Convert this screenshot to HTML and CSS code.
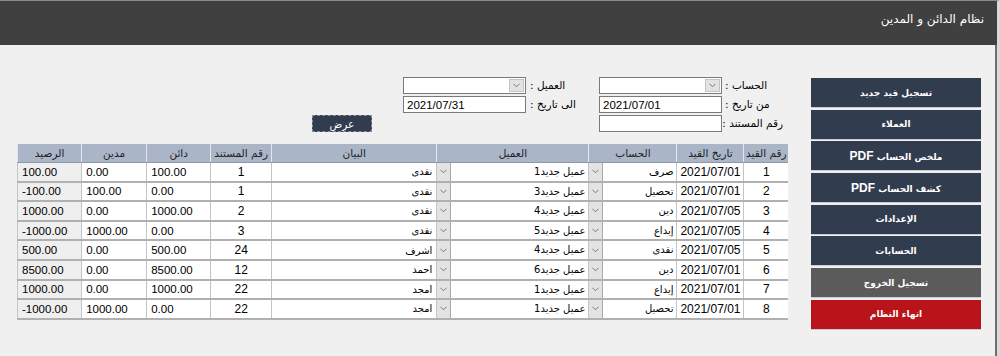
FILE: index.html
```html
<!DOCTYPE html>
<html lang="ar" dir="rtl">
<head>
  <meta charset="UTF-8" />
  <meta name="viewport" content="width=device-width, initial-scale=1.0"/>
  <title>نظام الدائن و المدين</title>
  <link rel="stylesheet" href="styles.css">
</head>
<body>
  <div class="app">
    <header class="titlebar">نظام الدائن و المدين</header>

    <div class="content">
      <aside class="side">
        <button class="nav">تسجيل قيد جديد</button>
        <button class="nav">العملاء</button>
        <button class="nav">ملخص الحساب <b>PDF</b></button>
        <button class="nav">كشف الحساب <b>PDF</b></button>
        <button class="nav">الإعدادات</button>
        <button class="nav">الحسابات</button>
        <button class="nav logout">تسجيل الخروج</button>
        <button class="nav quit">انهاء النظام</button>
      </aside>

      <main class="main">
        <form class="filters">
          <label class="lbl l1 r1">الحساب :</label>
          <div class="combo f1 r1"><span class="arrow"><svg viewBox="0 0 8 5"><path d="M0.5 0.5 L4 4 L7.5 0.5"/></svg></span><span class="val"></span></div>
          <label class="lbl l2 r1">العميل :</label>
          <div class="combo f2 r1"><span class="arrow"><svg viewBox="0 0 8 5"><path d="M0.5 0.5 L4 4 L7.5 0.5"/></svg></span><span class="val"></span></div>

          <label class="lbl l1 r2">من تاريخ :</label>
          <input class="field f1 r2" type="text" value="2021/07/01">
          <label class="lbl l2 r2">الى تاريخ :</label>
          <input class="field f2 r2" type="text" value="2021/07/31">

          <label class="lbl l1 r3">رقم المستند :</label>
          <input class="field f1 r3" type="text" value="">
          <button class="show r3" type="button">عرض</button>
        </form>

        <table class="grid">
          <colgroup>
            <col style="width:44px"><col style="width:67px"><col style="width:88px">
            <col style="width:152px"><col style="width:165px"><col style="width:61px">
            <col style="width:64px"><col style="width:65px"><col style="width:64px">
          </colgroup>
          <thead>
            <tr>
              <th>رقم القيد</th><th>تاريخ القيد</th><th>الحساب</th><th>العميل</th><th>البيان</th>
              <th>رقم المستند</th><th>دائن</th><th>مدين</th><th>الرصيد</th>
            </tr>
          </thead>
          <tbody id="rows"></tbody>
        </table>
      </main>
    </div>
  </div>

  <script>
    const rows = [
      [1, '2021/07/01', 'صرف', 'عميل جديد1', 'نقدى', 1, '100.00', '0.00', '100.00'],
      [2, '2021/07/01', 'تحصيل', 'عميل جديد3', 'نقدى', 1, '0.00', '100.00', '-100.00'],
      [3, '2021/07/05', 'دين', 'عميل جديد4', 'نقدى', 2, '1000.00', '0.00', '1000.00'],
      [4, '2021/07/05', 'إيداع', 'عميل جديد5', 'نقدى', 3, '0.00', '1000.00', '-1000.00'],
      [5, '2021/07/05', 'نقدى', 'عميل جديد4', 'اشرف', 24, '500.00', '0.00', '500.00'],
      [6, '2021/07/01', 'دين', 'عميل جديد6', 'احمد', 12, '8500.00', '0.00', '8500.00'],
      [7, '2021/07/01', 'إيداع', 'عميل جديد1', 'امجد', 22, '1000.00', '0.00', '1000.00'],
      [8, '2021/07/01', 'تحصيل', 'عميل جديد1', 'امجد', 22, '0.00', '1000.00', '-1000.00']
    ];
    const arrow = '<span class="arrow"><svg viewBox="0 0 8 5"><path d="M0.5 0.5 L4 4 L7.5 0.5"/></svg></span>';
    const combo = text => `<div class="cell-combo"><span class="val">${text}</span>${arrow}</div>`;

    document.getElementById('rows').innerHTML = rows.map(r => `
      <tr>
        <td class="num">${r[0]}</td>
        <td class="date">${r[1]}</td>
        <td class="cmb">${combo(r[2])}</td>
        <td class="cmb">${combo(r[3])}</td>
        <td class="note">${r[4]}</td>
        <td class="num">${r[5]}</td>
        <td class="amt">${r[6]}</td>
        <td class="amt">${r[7]}</td>
        <td class="amt bal">${r[8]}</td>
      </tr>`).join('');
  </script>
</body>
</html>
```

FILE: styles.css
```css
body {
  margin: 0;
  background-color: #f0f0f0;
  font-family: "Liberation Sans", "DejaVu Sans", sans-serif;
  color: #000;
}

.app {
  height: 356px;
  border-top: 1px solid #8a8a8a;
  border-right: 3px solid #d9d9d9;
  box-sizing: border-box;
  display: flex;
  flex-direction: column;
}

.titlebar {
  height: 44px;
  background-color: #404040;
  color: #fff;
  font-family: "DejaVu Sans", sans-serif;
  font-size: 12px;
  padding: 11px 13px 0 0;
  box-sizing: border-box;
}

.content {
  flex: 1;
  display: flex;
}

/* sidebar */
.side {
  width: 198px;
  border-right: 2px solid #6e6e6e;
  box-sizing: border-box;
  padding: 33px 14px 0 12px;
  display: flex;
  flex-direction: column;
  gap: 1.7px;
}

.nav {
  height: 30px;
  border: none;
  border-bottom: 1px solid #c9ccd2;
  background-color: #323c4f;
  color: #fff;
  font-family: "DejaVu Sans", sans-serif;
  font-size: 9px;
  font-weight: bold;
  padding: 0;
}

.nav b {
  font-family: "Liberation Sans", sans-serif;
  font-size: 12px;
}

.nav.logout {
  background-color: #5b5b5b;
}

.nav.quit {
  background-color: #b8141a;
}

/* main area */
.main {
  flex: 1;
  padding: 32px 11px 0 17px;
}

.filters {
  display: grid;
  grid-template-columns: 61px 123px 22px 51px 123px 31px 60px;
  grid-template-rows: 17px 17px 17px;
  row-gap: 2px;
  margin-right: 5px;
}

.r1 { grid-row: 1; }
.r2 { grid-row: 2; }
.r3 { grid-row: 3; }
.l1 { grid-column: 1; padding-left: 3px; }
.f1 { grid-column: 2; }
.l2 { grid-column: 4; padding-left: 4px; }
.f2 { grid-column: 5; }

.lbl {
  font-family: "DejaVu Sans", sans-serif;
  font-size: 10.5px;
  line-height: 17px;
  text-align: left;
  white-space: nowrap;
}

.field, .combo {
  height: 17px;
  box-sizing: border-box;
  border: 1px solid #7a7a7a;
  background-color: #fff;
  margin: 0;
}

.field {
  direction: ltr;
  text-align: left;
  font-family: "Liberation Sans", sans-serif;
  font-size: 11.5px;
  padding: 0 3px;
  outline: none;
}

.combo {
  display: flex;
}

.combo .val {
  flex: 1;
}

.arrow {
  width: 13px;
  flex: none;
  background-color: #e3e3e3;
  border-right: 1px solid #adadad;
  display: flex;
  align-items: center;
  justify-content: center;
}

.combo .arrow {
  margin: 1px 1px 1px 0;
  border: 1px solid #c4c4c4;
}

.arrow svg {
  width: 7px;
  height: 5px;
  fill: none;
  stroke: #6d6d6d;
  stroke-width: 1;
}

.show {
  grid-column: 7;
  height: 17px;
  border: 1px dashed #8a8f99;
  background-color: #323c4f;
  color: #fff;
  font-family: "DejaVu Sans", sans-serif;
  font-size: 10.5px;
  padding: 0;
}

/* table */
.grid {
  width: 771px;
  margin-top: 12px;
  border-collapse: collapse;
  table-layout: fixed;
  background-color: #fff;
  border-left: 1px solid #a8a8a8;
}

.grid th {
  height: 18px;
  background-color: #aab6c8;
  border-left: 1px solid #e4e8ee;
  border-bottom: 1px solid #8d97a6;
  font-family: "DejaVu Sans", sans-serif;
  font-size: 10.5px;
  font-weight: normal;
  color: #222;
  padding: 0;
  white-space: nowrap;
  overflow: hidden;
}

.grid td {
  height: 17.6px;
  padding: 0 4px;
  border-left: 1px solid #c4c4c4;
  border-bottom: 2px solid #b0b0b0;
  font-size: 11.5px;
  white-space: nowrap;
  overflow: hidden;
}

.grid td.num {
  text-align: center;
  font-size: 12px;
}

.grid td.date {
  text-align: right;
  font-size: 12px;
  padding-right: 3px;
}

.grid td.note {
  text-align: right;
  font-family: "DejaVu Sans", sans-serif;
  font-size: 10px;
}

.grid td.amt {
  direction: ltr;
  text-align: left;
}

.grid td.bal {
  background-color: #efefef;
}

.grid td.cmb {
  padding: 0;
}

.cell-combo {
  display: flex;
  height: 17.6px;
}

.cell-combo .val {
  flex: 1;
  text-align: right;
  padding-right: 3px;
  line-height: 17.6px;
  font-family: "DejaVu Sans", sans-serif;
  font-size: 10px;
}

.cell-combo .arrow {
  border-right: 1px solid #a9a9a9;
}
```
